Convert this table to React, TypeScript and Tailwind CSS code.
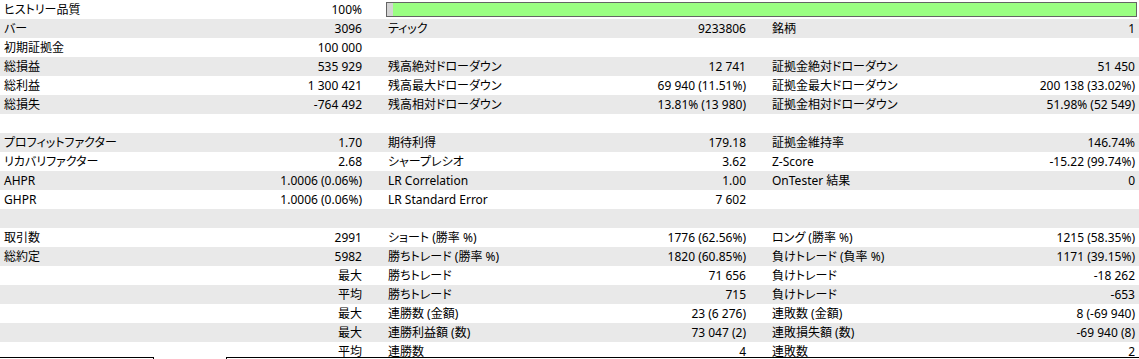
type Cell = [string, string]

const rows: Cell[][] = [
  [['ヒストリー品質', '100%']],
  [['バー', '3096'], ['ティック', '9233806'], ['銘柄', '1']],
  [['初期証拠金', '100 000'], ['', ''], ['', '']],
  [['総損益', '535 929'], ['残高絶対ドローダウン', '12 741'], ['証拠金絶対ドローダウン', '51 450']],
  [['総利益', '1 300 421'], ['残高最大ドローダウン', '69 940 (11.51%)'], ['証拠金最大ドローダウン', '200 138 (33.02%)']],
  [['総損失', '-764 492'], ['残高相対ドローダウン', '13.81% (13 980)'], ['証拠金相対ドローダウン', '51.98% (52 549)']],
  [['', ''], ['', ''], ['', '']],
  [['プロフィットファクター', '1.70'], ['期待利得', '179.18'], ['証拠金維持率', '146.74%']],
  [['リカバリファクター', '2.68'], ['シャープレシオ', '3.62'], ['Z-Score', '-15.22 (99.74%)']],
  [['AHPR', '1.0006 (0.06%)'], ['LR Correlation', '1.00'], ['OnTester 結果', '0']],
  [['GHPR', '1.0006 (0.06%)'], ['LR Standard Error', '7 602'], ['', '']],
  [['', ''], ['', ''], ['', '']],
  [['取引数', '2991'], ['ショート (勝率 %)', '1776 (62.56%)'], ['ロング (勝率 %)', '1215 (58.35%)']],
  [['総約定', '5982'], ['勝ちトレード (勝率 %)', '1820 (60.85%)'], ['負けトレード (負率 %)', '1171 (39.15%)']],
  [['', '最大'], ['勝ちトレード', '71 656'], ['負けトレード', '-18 262']],
  [['', '平均'], ['勝ちトレード', '715'], ['負けトレード', '-653']],
  [['', '最大'], ['連勝数 (金額)', '23 (6 276)'], ['連敗数 (金額)', '8 (-69 940)']],
  [['', '最大'], ['連勝利益額 (数)', '73 047 (2)'], ['連敗損失額 (数)', '-69 940 (8)']],
  [['', '平均'], ['連勝数', '4'], ['連敗数', '2']],
]

function Pair({ cell, last }: { cell: Cell; last?: boolean }) {
  return (
    <div className={`flex justify-between pl-[4px] ${last ? 'flex-1 pr-[4px]' : 'w-[384px] pr-[22px]'}`}>
      <span className="whitespace-nowrap">{cell[0]}</span>
      <span className="whitespace-nowrap">{cell[1]}</span>
    </div>
  )
}

export default function App() {
  return (
    <div
      className="w-[1139px] h-[359px] overflow-hidden bg-white text-[12px] leading-[19px] text-[#000] [font-feature-settings:'palt']"
      style={{ fontFamily: '"Noto Sans", "Noto Sans CJK JP", sans-serif' }}
    >
      <div className="h-[357px] overflow-hidden">
        {rows.map((row, i) => (
          <div key={i} className={`flex h-[19px] ${i % 2 === 1 ? 'bg-[#e9e9e9]' : 'bg-white'}`}>
            {i === 0 ? (
              <>
                <Pair cell={row[0]} />
                <div className="flex-1 pl-[2px] pt-[2px]">
                  <div className="flex h-[15px] w-[751px] border border-[#646464]">
                    <div className="w-[6px] bg-[#d4d4d4]" />
                    <div className="flex-1 bg-[#9afe82]" />
                  </div>
                </div>
              </>
            ) : (
              <>
                <Pair cell={row[0]} />
                <Pair cell={row[1]} />
                <Pair cell={row[2]} last />
              </>
            )}
          </div>
        ))}
      </div>
      <div className="flex h-[2px]">
        <div className="w-[154px] border-t border-r border-black" />
        <div className="w-[72px]" />
        <div className="flex-1 border-t border-l border-black" />
      </div>
    </div>
  )
}
